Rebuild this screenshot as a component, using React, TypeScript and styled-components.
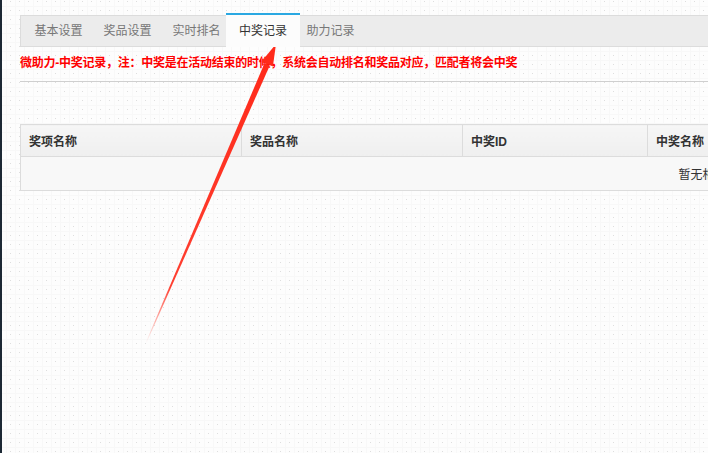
import React from "react";
import styled, { createGlobalStyle } from "styled-components";

const tabs = ["基本设置", "奖品设置", "实时排名", "中奖记录", "助力记录"];
const activeTab = 3;

const columns = [
  { title: "奖项名称", width: 221 },
  { title: "奖品名称", width: 221 },
  { title: "中奖ID", width: 185 },
  { title: "中奖名称", width: 185 },
  { title: "手机号码", width: 200 },
  { title: "操作", width: 376 },
];

export default function App() {
  return (
    <>
      <GlobalStyle />
      <Page>
        <SideStrip />
        <Content>
          <TabBar>
            {tabs.map((t, i) => (
              <Tab key={t} active={i === activeTab}>
                {t}
              </Tab>
            ))}
          </TabBar>
          <Notice>
            微助力-中奖记录，注：中奖是在活动结束的时候，系统会自动排名和奖品对应，匹配者将会中奖
          </Notice>
          <Divider />
          <Table>
            <colgroup>
              {columns.map((c) => (
                <col key={c.title} style={{ width: c.width }} />
              ))}
            </colgroup>
            <thead>
              <tr>
                {columns.map((c) => (
                  <Th key={c.title}>{c.title}</Th>
                ))}
              </tr>
            </thead>
            <tbody>
              <tr>
                <EmptyCell colSpan={columns.length}>暂无相关数据</EmptyCell>
              </tr>
            </tbody>
          </Table>
        </Content>
        {/* 标注箭头 */}
        <Arrow viewBox="0 0 708 453" width={708} height={453}>
          <defs>
            <linearGradient id="fade" x1="146" y1="343" x2="270" y2="60" gradientUnits="userSpaceOnUse">
              <stop offset="0" stopColor="#ff2a1a" stopOpacity="0" />
              <stop offset="0.2" stopColor="#ff2a1a" stopOpacity="0.9" />
              <stop offset="1" stopColor="#ff2a1a" />
            </linearGradient>
          </defs>
          <polygon points="146.4,343.1 145.6,342.8 264.6,63.0 269.8,65.4" fill="url(#fade)" />
          <polygon points="276,44 261.5,61.6 272.9,66.6" fill="#ff2a1a" />
        </Arrow>
      </Page>
    </>
  );
}

const GlobalStyle = createGlobalStyle`
  html, body {
    margin: 0;
    padding: 0;
    overflow: hidden;
  }
  body {
    font-family: "Liberation Sans", "Noto Sans CJK SC", sans-serif;
    font-size: 12px;
    color: #333;
    background-color: #fdfdfd;
    background-image:
      radial-gradient(circle at 1.5px 1.5px, #dedede 0.6px, transparent 0.9px),
      linear-gradient(to right, #f8f8f8 1px, transparent 1px),
      linear-gradient(to bottom, #f8f8f8 1px, transparent 1px);
    background-size: 9px 9px;
    background-position: 0 0, 6px 0, 0 6px;
  }
`;

const Page = styled.div`
  position: relative;
  display: flex;
  height: 453px;
  width: 708px;
  overflow: hidden;
`;

const SideStrip = styled.div`
  flex: 0 0 2px;
  background: #1d2935;
`;

const Content = styled.div`
  flex: 0 0 auto;
  width: 1400px;
  padding: 15px 0 0 18px;
`;

const TabBar = styled.div`
  display: flex;
  align-items: stretch;
  height: 30px;
  padding-left: 3px;
  border: 1px solid #dcdcdc;
  background: #ececec;
`;

const Tab = styled.div<{ active?: boolean }>`
  padding: 0 ${(p) => (p.active ? "13px" : "10.5px")};
  margin: ${(p) => (p.active ? "-3px -4px -1px -5px" : "0")};
  line-height: ${(p) => (p.active ? "33px" : "30px")};
  font-size: 12px;
  color: ${(p) => (p.active ? "#333" : "#777")};
  background: ${(p) => (p.active ? "#fcfcfc" : "transparent")};
  border-top: ${(p) => (p.active ? "2px solid #2aa8e2" : "none")};
  position: relative;
  z-index: ${(p) => (p.active ? 1 : 0)};
`;

const Notice = styled.div`
  margin-top: 6px;
  line-height: 20px;
  font-size: 12px;
  font-weight: bold;
  letter-spacing: -0.25px;
  color: #ff0000;
`;

const Divider = styled.div`
  margin-top: 8px;
  border-top: 1px solid #cfcfcf;
`;

const Table = styled.table`
  margin-top: 42px;
  width: 1388px;
  table-layout: fixed;
  border-collapse: collapse;
  border: 1px solid #dcdcdc;
`;

const Th = styled.th`
  height: 31px;
  padding: 0 8px;
  text-align: left;
  font-size: 12px;
  font-weight: bold;
  color: #333;
  background: linear-gradient(#f6f6f6, #efefef);
  border-right: 1px solid #dcdcdc;
  border-bottom: 1px solid #dcdcdc;
`;

const EmptyCell = styled.td`
  height: 31px;
  text-align: center;
  font-size: 12px;
  color: #333;
  background: #f8f8f8;
`;

const Arrow = styled.svg`
  position: absolute;
  left: 0;
  top: 0;
  pointer-events: none;
`;
